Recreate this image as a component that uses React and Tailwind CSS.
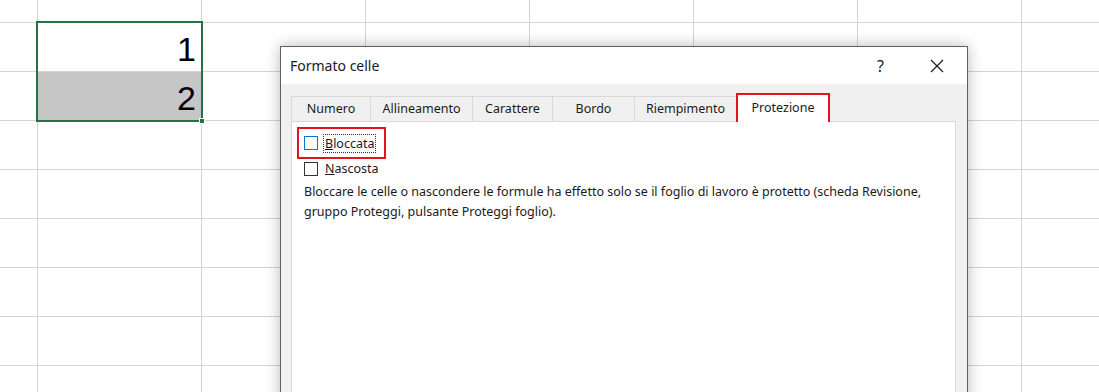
import React from 'react';

const colWidths = [38, 164, 164, 164, 164, 164, 164, 117];
const rowHeights = [23, 49, 49, 49, 49, 49, 49, 49, 27];

const tabs = [
  { label: 'Numero', w: 'w-[79px]' },
  { label: 'Allineamento', w: 'w-[102px]' },
  { label: 'Carattere', w: 'w-[80px]' },
  { label: 'Bordo', w: 'w-[82px]' },
  { label: 'Riempimento', w: 'w-[102px]' },
];

const Sheet = () => (
  <div className="flex flex-col">
    {rowHeights.map((h, r) => (
      <div key={r} className="flex" style={{ height: h }}>
        {colWidths.map((w, c) => {
          const gray = r === 2 && c === 1;
          const value = c === 1 && r === 1 ? '1' : c === 1 && r === 2 ? '2' : '';
          return (
            <div
              key={c}
              className={`shrink-0 border-r border-b border-[#d4d4d4] flex items-end justify-end pr-[5px] pb-[5px] text-[34px] leading-none text-black font-['Liberation_Sans',sans-serif] ${gray ? 'bg-[#c6c6c6]' : 'bg-white'}`}
              style={{ width: w }}
            >
              {value}
            </div>
          );
        })}
      </div>
    ))}
  </div>
);

const Checkbox = ({ blue }) => (
  <span className={`w-[14px] h-[14px] bg-white border ${blue ? 'border-[#0078d7]' : 'border-[#333333]'} shrink-0`} />
);

const Dialog = () => (
  <div className="absolute left-[280px] top-[46px] w-[688px] h-[360px] border border-[#5f5f5f] bg-[#f0f0f0] shadow-[0_0_14px_rgba(0,0,0,0.28)] font-['Noto_Sans',sans-serif] text-[#1a1a1a]">
    <div className="h-[37px] bg-white flex items-center pl-[9px] pr-[18px]">
      <span className="text-[14px] flex-1">Formato celle</span>
      <span className="text-[16px] mr-[46px]">?</span>
      <svg width="14" height="14" viewBox="0 0 14 14" className="mr-[5px]">
        <path d="M1 1L13 13M13 1L1 13" stroke="#1a1a1a" strokeWidth="1.2" />
      </svg>
    </div>
    <div className="pl-[10px] pt-[8px]">
      <div className="flex items-end h-[29px]">
        {tabs.map((t) => (
          <div
            key={t.label}
            className={`${t.w} h-[25px] border-t border-l border-[#d9d9d9] last:border-r flex items-center justify-center text-[12.5px]`}
          >
            {t.label}
          </div>
        ))}
        <div className="w-[94px] h-[29px] bg-white border-2 border-b-0 border-[#e0161d] flex items-center justify-center text-[12.5px] -mb-px relative z-10">
          Protezione
        </div>
      </div>
      <div className="w-[665px] h-[280px] bg-white border border-[#d9d9d9] pl-[5px] pt-[5px]">
        <div className="inline-flex items-center gap-[5px] border-2 border-[#e0161d] pl-[5px] pr-[8px] h-[32px]">
          <Checkbox blue />
          <span className="text-[12.5px] border border-dotted border-[#333] px-[1px] leading-[17px]">
            <span className="underline">B</span>loccata
          </span>
        </div>
        <div className="flex items-center gap-[7px] pl-[7px] mt-[1px] h-[18px]">
          <Checkbox />
          <span className="text-[12.5px]">
            <span className="underline">N</span>ascosta
          </span>
        </div>
        <p className="pl-[7px] mt-[4px] text-[12.5px] leading-[20px] w-[650px]">
          Bloccare le celle o nascondere le formule ha effetto solo se il foglio di lavoro è protetto (scheda Revisione, gruppo Proteggi, pulsante Proteggi foglio).
        </p>
      </div>
    </div>
  </div>
);

export default function App() {
  return (
    <div className="relative w-[1099px] h-[392px] overflow-hidden bg-white">
      <Sheet />
      <div className="absolute left-[36px] top-[21px] w-[167px] h-[101px] border-2 border-[#217346]" />
      <div className="absolute left-[199px] top-[118px] w-[6px] h-[6px] bg-[#217346] border border-white" />
      <Dialog />
    </div>
  );
}
